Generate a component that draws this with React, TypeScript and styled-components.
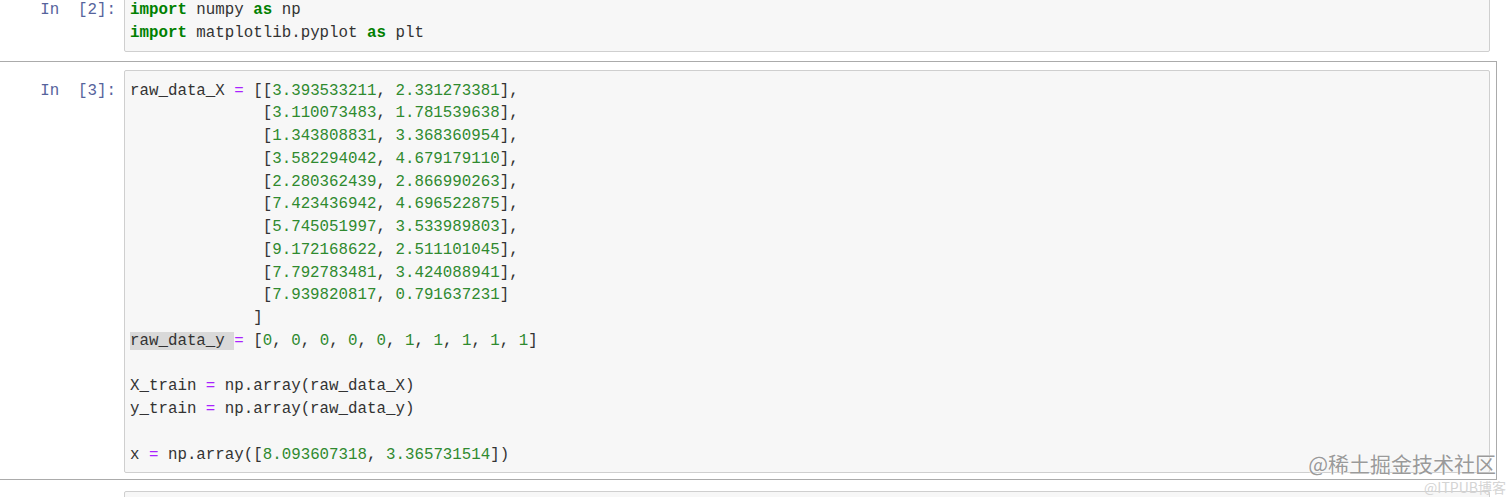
import React from "react";
import styled, { createGlobalStyle } from "styled-components";

const Global = createGlobalStyle`
  html, body { margin: 0; padding: 0; background: #ffffff; overflow: hidden; }
  body { width: 1512px; height: 497px; }
`;

const Page = styled.div`
  position: relative;
  width: 1512px;
  height: 497px;
  overflow: hidden;
  background: #fff;
`;

const Notebook = styled.div`
  display: flex;
  flex-direction: column;
  gap: 2px;
  margin: -20px 0 0 -12px;
  width: 1509px;
`;

const Cell = styled.div<{ $selected?: boolean }>`
  display: grid;
  grid-template-columns: 135px 1fr;
  align-items: start;
  padding: 8px 6px 6px 0;
  border: 1px solid ${(p) => (p.$selected ? "#ababab" : "transparent")};
`;

const Prompt = styled.div`
  padding: 10px 8px 0 0;
  text-align: right;
  font-family: "Liberation Mono", monospace;
  font-size: 15.8px;
  line-height: 22.75px;
  color: #56639c;
  white-space: pre;
`;

const InputArea = styled.div`
  background: #f7f7f7;
  border: 1px solid #cfcfcf;
  border-radius: 2px;
  padding: 9px 6px 6px 5px;
  min-height: 40px;
`;

const Line = styled.div`
  font-family: "Liberation Mono", monospace;
  font-size: 15.8px;
  line-height: 22.75px;
  height: 22.75px;
  color: #333;
  white-space: pre;
`;

const Kw = styled.span`
  color: #008000;
  font-weight: bold;
`;

const Num = styled.span`
  color: #2f8a2f;
`;

const Op = styled.span`
  color: #aa22ff;
`;

const Mark = styled.span`
  background: #d9d9d9;
`;

const Watermark = styled.div`
  position: absolute;
  right: 16px;
  bottom: 22px;
  font-family: "Noto Sans CJK SC", sans-serif;
  font-size: 21px;
  line-height: 24px;
  color: #9a9a9a;
  text-shadow: 0 0 2px #fff, 0 0 1px #fff;
  white-space: nowrap;
`;

const SubMark = styled.div`
  position: absolute;
  right: 6px;
  bottom: 2px;
  font-family: "Noto Sans CJK SC", sans-serif;
  font-size: 14px;
  line-height: 16px;
  color: #d4d4d4;
  white-space: nowrap;
`;

function tokenize(src: string): React.ReactNode[] {
  const out: React.ReactNode[] = [];
  const re = /(\b(?:import|as)\b)|(\d+(?:\.\d+)?)|(=)/g;
  let last = 0;
  let m: RegExpExecArray | null;
  let k = 0;
  while ((m = re.exec(src))) {
    if (m.index > last) out.push(src.slice(last, m.index));
    if (m[1]) out.push(<Kw key={k++}>{m[1]}</Kw>);
    else if (m[2]) out.push(<Num key={k++}>{m[2]}</Num>);
    else out.push(<Op key={k++}>{m[3]}</Op>);
    last = m.index + m[0].length;
  }
  if (last < src.length) out.push(src.slice(last));
  return out;
}

const cell2Lines = [
  "raw_data_X = [[3.393533211, 2.331273381],",
  "              [3.110073483, 1.781539638],",
  "              [1.343808831, 3.368360954],",
  "              [3.582294042, 4.679179110],",
  "              [2.280362439, 2.866990263],",
  "              [7.423436942, 4.696522875],",
  "              [5.745051997, 3.533989803],",
  "              [9.172168622, 2.511101045],",
  "              [7.792783481, 3.424088941],",
  "              [7.939820817, 0.791637231]",
  "             ]",
  "@@MARK",
  "",
  "X_train = np.array(raw_data_X)",
  "y_train = np.array(raw_data_y)",
  "",
  "x = np.array([8.093607318, 3.365731514])",
];

export default function App() {
  return (
    <Page>
      <Global />
      <Notebook>
        <Cell>
          <Prompt>{"In  [2]:"}</Prompt>
          <InputArea>
            <Line>{tokenize("import numpy as np")}</Line>
            <Line>{tokenize("import matplotlib.pyplot as plt")}</Line>
          </InputArea>
        </Cell>
        <Cell $selected>
          <Prompt>{"In  [3]:"}</Prompt>
          <InputArea>
            {cell2Lines.map((l, i) =>
              l === "@@MARK" ? (
                <Line key={i}>
                  <Mark>{"raw_data_y "}</Mark>
                  {tokenize("= [0, 0, 0, 0, 0, 1, 1, 1, 1, 1]")}
                </Line>
              ) : (
                <Line key={i}>{l === "" ? " " : tokenize(l)}</Line>
              )
            )}
          </InputArea>
        </Cell>
        <Cell>
          <Prompt>{" "}</Prompt>
          <InputArea>
            <Line> </Line>
          </InputArea>
        </Cell>
      </Notebook>
      <Watermark>@稀土掘金技术社区</Watermark>
      <SubMark>@ITPUB博客</SubMark>
    </Page>
  );
}
